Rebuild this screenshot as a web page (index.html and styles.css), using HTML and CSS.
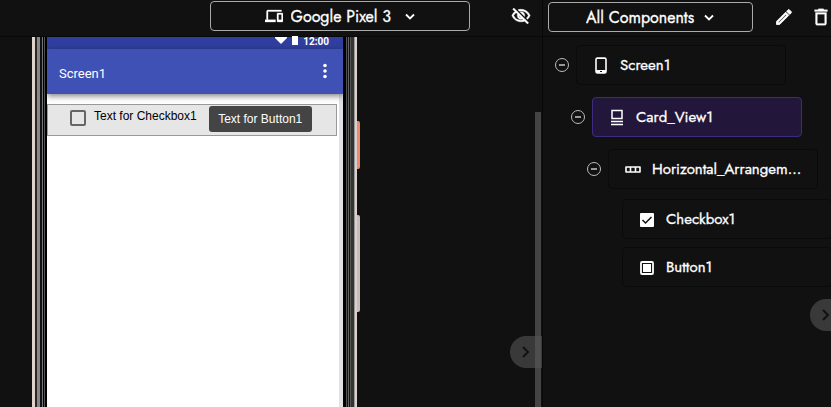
FILE: index.html
```html
<!DOCTYPE html>
<html lang="en">
<head>
  <meta charset="UTF-8" />
  <meta name="viewport" content="width=device-width, initial-scale=1.0" />
  <title>Designer</title>
  <link rel="stylesheet" href="styles.css">
</head>
<body>
  <div class="designer">
    <section class="viewer">
      <header class="toolbar viewer-toolbar">
        <label class="dropdown device-dropdown">
          <svg class="icon" width="18" height="18" viewBox="0 0 24 24"><path fill="currentColor" stroke="currentColor" stroke-width=".4" d="M4 6h18V4H4c-1.100 0-2 .9-2 2v11H0v3h14v-3H4V6zm19 2h-6c-.6 0-1 .4-1 1v10c0 .6.4 1 1 1h6c.6 0 1-.4 1-1V9c0-.6-.4-1-1-1zm-1 9h-4v-7h4v7z"/></svg>
          <select aria-label="Device">
            <option>Google Pixel 3</option>
          </select>
          <svg class="chevron" width="12" height="12" viewBox="0 0 12 12"><path d="M2 4.500l4 4 4-4" fill="none" stroke="currentColor" stroke-width="1.800"/></svg>
        </label>
        <button class="icon-button" aria-label="Toggle hidden components">
          <svg width="20" height="20" viewBox="0 0 24 24"><path fill="currentColor" stroke="currentColor" stroke-width=".5" d="M12 6a9.770 9.770 0 0 1 8.820 5.500 9.650 9.650 0 0 1-2.410 3.120l1.410 1.410c1.390-1.230 2.490-2.770 3.180-4.530C21.270 7.110 17 4 12 4c-1.270 0-2.490.2-3.640.57l1.650 1.650C10.660 6.090 11.320 6 12 6zm-1.070 1.140L13 9.210c.57.25 1.030.71 1.280 1.280l2.070 2.070c.08-.34.14-.7.14-1.070C16.500 9.010 14.480 7 12 7c-.37 0-.72.05-1.070.14zM2.010 3.870l2.680 2.680A11.740 11.740 0 0 0 1 11.500C2.730 15.890 7 19 12 19c1.520 0 2.980-.29 4.320-.82l3.420 3.420 1.410-1.410L3.420 2.450 2.010 3.870zm7.500 7.500l2.610 2.610c-.04.01-.08.02-.12.02a2.500 2.500 0 0 1-2.500-2.500c0-.05.01-.08.01-.13zm-3.400-3.400l1.750 1.750a4.600 4.600 0 0 0-.36 1.780 4.507 4.507 0 0 0 6.270 4.140l.98.98c-.88.24-1.800.38-2.750.38a9.770 9.770 0 0 1-8.820-5.500c.7-1.430 1.720-2.610 2.930-3.530z"/></svg>
        </button>
      </header>

      <div class="stage">
        <div class="phone">
          <div class="bezel bezel-left"></div>
          <div class="screen">
            <div class="status-bar">
              <svg width="12" height="12" viewBox="0 0 12 12"><path fill="currentColor" d="M0 2h12v1L6 9 0 3z"/></svg>
              <svg width="6" height="12" viewBox="0 0 6 12"><path fill="currentColor" d="M0 1h6v9H0z"/></svg>
              <span>12:00</span>
            </div>
            <div class="title-bar">
              <span>Screen1</span>
              <button class="menu-button" aria-label="Menu">
                <svg width="4" height="16" viewBox="0 0 4 16" fill="currentColor"><circle cx="2" cy="2.500" r="1.800"/><circle cx="2" cy="8" r="1.800"/><circle cx="2" cy="13.500" r="1.800"/></svg>
              </button>
            </div>
            <div class="form">
              <div class="card">
                <label class="check"><input type="checkbox"><span>Text for Checkbox1</span></label>
                <button class="form-button">Text for Button1</button>
              </div>
            </div>
          </div>
          <div class="bezel bezel-right"></div>
          <div class="side-keys">
            <div class="power-key"></div>
            <div class="volume-key"></div>
          </div>
        </div>
        <div class="scrollbar"></div>
      </div>
      <button class="collapse viewer-collapse" aria-label="Collapse viewer">
        <svg width="10" height="14" viewBox="0 0 10 14"><path d="M2 2l5 5-5 5" fill="none" stroke="currentColor" stroke-width="2"/></svg>
      </button>
    </section>

    <section class="components">
      <header class="toolbar components-toolbar">
        <label class="dropdown filter-dropdown">
          <select aria-label="Component filter">
            <option>All Components</option>
          </select>
          <svg class="chevron" width="12" height="12" viewBox="0 0 12 12"><path d="M2 4.500l4 4 4-4" fill="none" stroke="currentColor" stroke-width="1.800"/></svg>
        </label>
        <button class="icon-button" aria-label="Rename">
          <svg width="20" height="20" viewBox="0 0 24 24"><path fill="currentColor" stroke="currentColor" stroke-width="1" d="M14.060 9.020l.92.92L5.920 19H5v-.92l9.060-9.060M17.660 3c-.25 0-.51.1-.7.29l-1.830 1.830 3.750 3.750 1.830-1.830a1 1 0 0 0 0-1.410l-2.340-2.340c-.2-.2-.45-.29-.71-.29zm-3.600 3.190L3 17.250V21h3.750L17.810 9.940l-3.750-3.750z"/></svg>
        </button>
        <button class="icon-button" aria-label="Delete">
          <svg width="22" height="22" viewBox="0 0 24 24"><path fill="currentColor" stroke="currentColor" stroke-width=".3" d="M6 19c0 1.100.9 2 2 2h8c1.100 0 2-.9 2-2V7H6v12zM8 9h8v10H8V9zm7.500-5l-1-1h-5l-1 1H5v2h14V4h-3.500z"/></svg>
        </button>
      </header>

      <ul class="tree">
        <li>
          <div class="row">
            <button class="toggle" aria-label="Collapse Screen1"></button>
            <button class="node">
              <svg class="icon" width="18" height="18" viewBox="0 0 18 18"><rect x="4" y="2" width="10" height="15" rx="1.500" fill="none" stroke="currentColor" stroke-width="1.600"/><path fill="currentColor" d="M4 2h10v1H4zM4 14h10v3H4z"/><path d="M8 15.500h2" stroke="#111"/></svg>
              <span>Screen1</span>
            </button>
          </div>
          <ul>
            <li>
              <div class="row">
                <button class="toggle" aria-label="Collapse Card_View1"></button>
                <button class="node selected">
                  <svg class="icon" width="18" height="18" viewBox="0 0 18 18"><path d="M4 2.500h10v8H4zM3 13.500h12M3 16.500h12" fill="none" stroke="currentColor" stroke-width="1.500"/></svg>
                  <span>Card_View1</span>
                </button>
              </div>
              <ul>
                <li>
                  <div class="row">
                    <button class="toggle" aria-label="Collapse Horizontal_Arrangement"></button>
                    <button class="node">
                      <svg class="icon" width="18" height="18" viewBox="0 0 18 18"><path d="M2 7h14v5H2zM6.500 7v5M11.500 7v5" fill="none" stroke="currentColor" stroke-width="1.600" stroke-linejoin="round"/></svg>
                      <span>Horizontal_Arrangem...</span>
                    </button>
                  </div>
                  <ul class="leaves">
                    <li>
                      <button class="node">
                        <svg class="icon" width="18" height="18" viewBox="0 0 18 18"><rect x="2" y="3" width="14" height="14" rx="1" fill="currentColor"/><path d="M4.500 10l3 3 6-6" fill="none" stroke="#111" stroke-width="1.500"/></svg>
                        <span>Checkbox1</span>
                      </button>
                    </li>
                    <li>
                      <button class="node">
                        <svg class="icon" width="18" height="18" viewBox="0 0 18 18"><rect x="3" y="4" width="12" height="12" rx="1" fill="none" stroke="currentColor" stroke-width="1.800"/><path fill="currentColor" d="M5 6h8v8H5z"/></svg>
                        <span>Button1</span>
                      </button>
                    </li>
                  </ul>
                </li>
              </ul>
            </li>
          </ul>
        </li>
      </ul>
      <button class="collapse components-collapse" aria-label="Collapse components">
        <svg width="10" height="14" viewBox="0 0 10 14"><path d="M2 2l5 5-5 5" fill="none" stroke="currentColor" stroke-width="2"/></svg>
      </button>
    </section>
  </div>
</body>
</html>
```
FILE: styles.css
```css
* {
  box-sizing: border-box;
}
body {
  margin: 0;
  background: #111;
  color: #fff;
  font-family: Jost, Lato, sans-serif;
  font-size: 15px;
}
button,
select {
  font: inherit;
  color: inherit;
  background: none;
  border: none;
  padding: 0;
  cursor: pointer;
}
svg {
  display: block;
  flex-shrink: 0;
}
ul {
  list-style: none;
  margin: 0;
  padding: 0;
}
.designer {
  display: grid;
  grid-template-columns: 1fr 288px;
  height: 100vh;
  overflow: hidden;
}
.viewer,
.components {
  position: relative;
  display: flex;
  flex-direction: column;
  min-width: 0;
  overflow: hidden;
}
.viewer {
  border-right: 1px solid #080808;
}

/* Toolbars */
.toolbar {
  display: flex;
  align-items: center;
  flex-shrink: 0;
  height: 37px;
  border-bottom: 1px solid #080808;
}
.viewer-toolbar {
  justify-content: flex-end;
  gap: 41px;
  padding: 0 11px 4px 0;
}
.components-toolbar {
  gap: 16px;
  padding: 0 0 2px 5px;
}
.dropdown {
  display: flex;
  align-items: center;
  justify-content: center;
  gap: 8px;
  height: 30px;
  border: 1px solid #aaa;
  border-radius: 4px;
  font-size: 16px;
}
.dropdown select {
  appearance: none;
  outline: none;
}
.dropdown select,
.node span {
  -webkit-text-stroke: 0.3px #fff;
}
.device-dropdown {
  width: 260px;
}
.device-dropdown .chevron {
  margin-left: 4px;
}
.filter-dropdown {
  width: 205px;
  margin-right: 5px;
  flex-shrink: 0;
}
.icon-button {
  flex-shrink: 0;
}

/* Phone preview */
.stage {
  display: flex;
  justify-content: space-between;
  flex: 1;
  padding-left: 32px;
  min-height: 0;
}
.phone {
  display: flex;
}
.bezel-left {
  width: 15px;
  background: linear-gradient(to right, #e0d3cc 0 3px, #282828 3px 5px, #888 5px 8px, #111 8px 10px, #777 10px 11px, #000 11px 12px, #555 12px 13px, #000 13px);
}
.bezel-right {
  width: 14px;
  background: linear-gradient(to right, #000 0 3px, #555 3px 4px, #111 4px 5px, #666 5px 6px, #111 6px 7px, #555 7px 8px, #333 8px 11px, #999 11px 12px, #ddd0cc 12px);
}
.side-keys {
  width: 3px;
  padding-top: 84px;
}
.power-key {
  height: 48px;
  background: #e98e68;
  border-radius: 0 2px 2px 0;
}
.volume-key {
  height: 97px;
  margin-top: 46px;
  background: #c9bcbc;
  border-radius: 0 2px 2px 0;
}
.screen {
  display: flex;
  flex-direction: column;
  width: 296px;
  background: #fff;
  font-family: "Liberation Sans", Arial, sans-serif;
  font-size: 12px;
}
.status-bar {
  display: flex;
  align-items: center;
  justify-content: flex-end;
  gap: 5px;
  height: 12px;
  padding-right: 14px;
  padding-bottom: 4px;
  background: #303f9f;
  font-family: Roboto, sans-serif;
  font-size: 10px;
  font-weight: 700;
}
.title-bar {
  display: flex;
  align-items: center;
  justify-content: space-between;
  height: 45px;
  padding: 4px 16px 0 12px;
  background: #3f51b5;
  box-shadow: 0 2px 6px rgba(0, 0, 0, 0.5);
  font-family: Roboto, sans-serif;
  font-size: 13px;
  z-index: 1;
}
.menu-button {
  padding-bottom: 6px;
}
.form {
  flex: 1;
  padding: 10px 2px 0 0;
  border-right: 4px solid #dfe1e6;
}
.card {
  display: flex;
  height: 32px;
  padding: 1px 24px 0 22px;
  gap: 12px;
  background: #e6e6e6;
  border: 1px solid #999;
  color: #000;
}
.check {
  display: flex;
  align-items: center;
  gap: 8px;
  height: 20px;
  white-space: nowrap;
}
.check input {
  appearance: none;
  flex-shrink: 0;
  width: 16px;
  height: 16px;
  margin: 4px 0 0;
  border: 2px solid #666;
  border-radius: 2px;
}
.form-button {
  width: 103px;
  height: 26px;
  background: #444;
  color: #fff;
  border-radius: 3px;
  white-space: nowrap;
}
.scrollbar {
  width: 6px;
  margin: 75px 1px 0 0;
  background: #444;
}

/* Component tree */
.tree {
  padding: 8px 0 0 12px;
}
.tree ul {
  padding: 12px 0 0 16px;
}
.tree .leaves {
  display: flex;
  flex-direction: column;
  gap: 8px;
  padding: 10px 0 0 35px;
}
.row {
  display: flex;
  align-items: center;
  gap: 7px;
}
.toggle {
  display: flex;
  align-items: center;
  justify-content: center;
  width: 14px;
  height: 14px;
  border: 1px solid #bbb;
  border-radius: 50%;
  flex-shrink: 0;
}
.toggle::after {
  content: "";
  width: 6px;
  height: 2px;
  background: #999;
}
.node {
  display: flex;
  align-items: center;
  gap: 10px;
  width: 210px;
  height: 40px;
  padding: 0 15px;
  border: 1px solid #0a0a0a;
  border-radius: 4px;
  text-align: left;
  flex-shrink: 0;
}
.node span {
  white-space: nowrap;
}
.node.selected {
  background: #22163b;
  border-color: #3e2a80;
}

/* Collapse handles over the panel edges */
.collapse {
  position: absolute;
  right: 0;
  width: 32px;
  height: 32px;
  padding-left: 11px;
  background: rgba(85, 85, 85, 0.6);
  color: #111;
  border-radius: 16px 0 0 16px;
}
.viewer-collapse {
  bottom: 39px;
}
.components-collapse {
  bottom: 76px;
  right: -11px;
}
```
